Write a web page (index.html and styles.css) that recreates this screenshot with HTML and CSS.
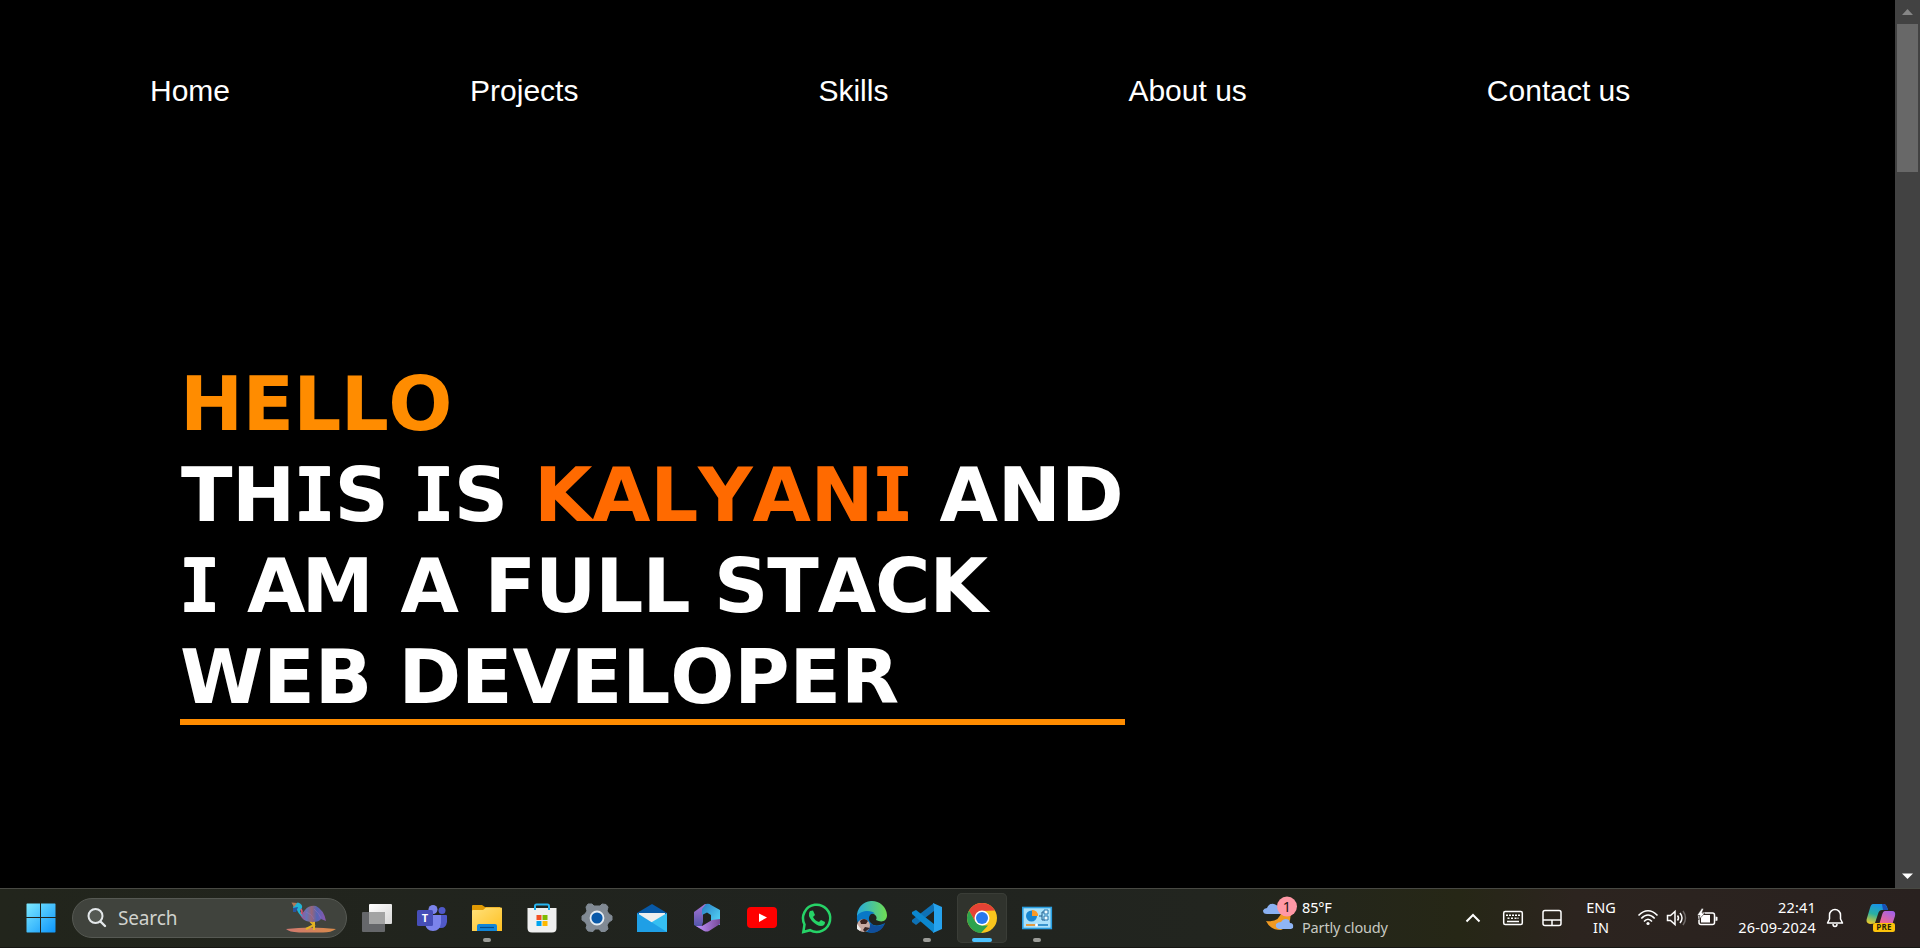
FILE: index.html
```html
<!DOCTYPE html>
<html lang="en">
<head>
<meta charset="utf-8">
<title>Portfolio</title>
<link rel="stylesheet" href="styles.css">
</head>
<body>
<div class="window">
  <main class="page">
    <nav class="nav">
      <a>Home</a><a>Projects</a><a>Skills</a><a>About us</a><a>Contact us</a>
    </nav>
    <h1 class="hero">
      <span class="line"><span class="w hello">HELLO</span></span>
      <span class="line"><span class="w this">TH<i>I</i>S</span> <span class="w is"><i>I</i>S</span> <span class="w name">KALYAN<i>I</i></span> <span class="w and">AND</span></span>
      <span class="line"><span class="w one"><i>I</i></span> <span class="w am">A<b>M</b></span> <span class="w a">A</span> <span class="w full">FULL</span> <span class="w stack">STACK</span></span>
      <span class="line"><span class="w web">WEB</span> <span class="w dev">DEVELOPER</span></span>
    </h1>
  </main>
  <aside class="scrollbar">
    <svg width="25" height="24"><path d="M7 15L12.500 9L18 15Z" fill="#868686"/></svg>
    <div class="thumb"></div>
    <svg class="down" width="25" height="24"><path d="M7 9.500L12.500 15L18 9.500Z" fill="#fff"/></svg>
  </aside>
</div>
<footer class="taskbar">
  <svg class="start" width="30" height="30" viewBox="0 0 30 30">
    <defs><linearGradient id="win" gradientUnits="userSpaceOnUse" x1="0" y1="0" x2="30" y2="30"><stop offset="0" stop-color="#7feaff"/><stop offset="1" stop-color="#0a94fb"/></linearGradient></defs>
    <path fill="url(#win)" d="M1 .5H14V14H.5V1ZM15 .5H29L29.500 1V14H15ZM.5 15H14V29.500H1L.5 29ZM15 15H29.500V29L29 29.500H15Z"/>
  </svg>
  <div class="search">
    <svg width="20" height="20" viewBox="0 0 20 20" fill="none" stroke="#e4e8ea" stroke-width="2"><circle cx="8.500" cy="8" r="7" fill="#555952"/><path d="M13.500 13.500L18 18" stroke-width="2.400" stroke-linecap="round"/></svg>
    <span>Search</span>
    <svg class="bird" width="52" height="32" viewBox="0 0 52 32">
      <defs><linearGradient id="fe" x1="0" x2="1"><stop offset="0" stop-color="#b24b8e"/><stop offset=".25" stop-color="#6674b6"/><stop offset=".45" stop-color="#986579"/><stop offset=".65" stop-color="#5365b5"/><stop offset="1" stop-color="#8f55ad"/></linearGradient>
      <linearGradient id="sand" x1="0" x2="1"><stop offset="0" stop-color="#d17970"/><stop offset="1" stop-color="#d88a49"/></linearGradient></defs>
      <path d="M1 27Q26 24 51 27Q46 30.500 38 30.500H14Q4 30 1 27Z" fill="url(#sand)"/>
      <path d="M25 19L29 23L21 27M29 19V28" stroke="#e4b223" stroke-width="2" fill="none"/>
      <path d="M15 10Q15 14 17 16Q20 20 28 20Q34 20 36 17L41 19Q39 8 31 4Q24 3 20 8L16 13Z" fill="url(#fe)"/>
      <path d="M9 2L13 .500Q18 2 17 6L15 9L18 15Q14 13 12 8L8 6Z" fill="#20b4d5"/>
      <path d="M6.500 .500L12 1L9 5Z" fill="#b37855"/><path d="M8 6L13 5L11 10L8 10Z" fill="#2753a0"/>
      <path d="M16 7Q18 10 16 12" stroke="#df5570" stroke-width="1.500" fill="none"/>
      <path d="M21 10Q27 12 29 17M29 7Q34 11 36 16" stroke="#9671bd" stroke-opacity=".5" fill="none"/>
    </svg>
  </div>
  <div class="apps">
    <div class="app"><svg width="32" height="32" viewBox="0 0 32 32"><defs><linearGradient id="tv" x1="0" y1="0" x2="1" y2="1"><stop offset="0" stop-color="#fff"/><stop offset="1" stop-color="#d7d7d7"/></linearGradient></defs><rect x="1" y="10" width="23" height="20" rx="1" fill="#65676a"/><rect x="8" y="2" width="23" height="20" rx="1" fill="url(#tv)"/><rect x="8" y="10" width="16" height="12" fill="#a3a4a4"/></svg></div>
    <div class="app"><svg width="32" height="32" viewBox="0 0 32 32"><circle cx="26" cy="8.500" r="3.500" fill="#5059c9"/><path d="M20 13H30Q31 13 31 14V20Q30 26 25 26H20Z" fill="#5059c9"/><circle cx="17" cy="7.500" r="4.500" fill="#7b83eb"/><path d="M9 13H25V21Q24 29 17 29T9 21Z" fill="#7b83eb"/><rect x="1" y="8" width="16" height="16" rx="1.500" fill="#464eb8"/><text x="9" y="20" class="team-t" text-anchor="middle">T</text></svg></div>
    <div class="app run"><svg width="32" height="32" viewBox="0 0 32 32"><defs><linearGradient id="fo" x1="0" y1="0" x2="1" y2="1"><stop offset="0" stop-color="#ffe17b"/><stop offset="1" stop-color="#ffc021"/></linearGradient></defs><path d="M1 12V4Q1 3 2 3H11L14 5H29V12Z" fill="#e09a04"/><path d="M1 9Q1 8 2 8H12L15 5.500H30Q31 5.500 31 6.500V29H1Z" fill="url(#fo)"/><path d="M6 29V24Q6 22 8 22H24Q26 22 26 24V29Z" fill="#1186d8"/><path d="M9 25.500H23" stroke="#064b87" stroke-width="1.200"/></svg></div>
    <div class="app"><svg width="32" height="32" viewBox="0 0 32 32"><path d="M9 9V4Q9 2.500 10.500 2.500H21.500Q23 2.500 23 4V9" fill="none" stroke="#27b4ef" stroke-width="2"/><path d="M1.500 6H30.500V26Q30.500 30.500 26 30.500H6Q1.500 30.500 1.500 26Z" fill="#f0f0f0"/><path d="M9 6V8M23 6V8" stroke="#1aa8e8" stroke-width="2"/><path fill="#f25022" d="M10.500 13h5v5h-5z"/><path fill="#7fba00" d="M16.500 13h5v5h-5z"/><path fill="#00a4ef" d="M10.500 19h5v5h-5z"/><path fill="#ffb900" d="M16.500 19h5v5h-5z"/></svg></div>
    <div class="app"><svg width="32" height="32" viewBox="0 0 32 32"><path d="M7 2L11 2L13 4H19L21 2L25 2.500L27 5L26 9L28 12L31 14V18L28 20L26 23L27 27L24 29.500H20L18 27H14L12 29.500L7 29L5 26L6 23L4 20L1 18V14L4 12L6 9L5 5Z" fill="#818a94" stroke="#818a94" stroke-linejoin="round"/><circle cx="16" cy="16" r="6.500" fill="#0959a9" stroke="#e6edf3" stroke-width="1.800"/></svg></div>
    <div class="app"><svg width="32" height="32" viewBox="0 0 32 32"><path d="M1 11L16 2L31 11V18H1Z" fill="#0759a7"/><path d="M3 11H29V22H3Z" fill="#eee"/><path d="M31 11V30H1L16 20Z" fill="#35bff2"/><path d="M1 11L31 30H1Z" fill="#1f9fe6"/></svg></div>
    <div class="app"><svg width="32" height="32" viewBox="0 0 32 32"><defs><linearGradient id="ma" x1="0" y1="0" x2="0" y2="1"><stop offset="0" stop-color="#aa75d5"/><stop offset="1" stop-color="#4752a5"/></linearGradient><linearGradient id="mb" x1="0" y1="0" x2="1" y2="1"><stop offset="0" stop-color="#287ec4"/><stop offset="1" stop-color="#58ddfc"/></linearGradient><linearGradient id="mc" x1="0" y1="0" x2="1" y2="0"><stop offset="0" stop-color="#c393ff"/><stop offset="1" stop-color="#784a99"/></linearGradient></defs><path d="M14 2L18 3L12 11V20L10 27L3 23V10Z" fill="url(#ma)"/><path d="M15 2Q18 1 20 3L29 8V23L20 19V13L16 10.500L11 13V7Z" fill="url(#mb)"/><path d="M29 17V22L18 29Q16 30 13 29L5 24H11L21 18Z" fill="url(#mc)"/></svg></div>
    <div class="app"><svg width="32" height="32" viewBox="0 0 32 32"><rect x="1" y="5" width="30" height="21" rx="4" fill="#f00"/><path d="M13 11.500L21 15.500L13 20Z" fill="#fff"/></svg></div>
    <div class="app"><svg width="32" height="32" viewBox="0 0 32 32"><path d="M3.500 22.500A13.600 13.600 0 1 1 9 28.200L2.300 30Z" fill="none" stroke="#26d367" stroke-width="2.500"/><path d="M9 9L12 8.500L14 13L12 15Q14 19 18 20L20 18L24 20Q24 24 20 24Q16 24 11 19Q6 13 9 9Z" fill="#26d367"/></svg></div>
    <div class="app"><svg width="32" height="32" viewBox="0 0 32 32"><defs><linearGradient id="ea" x1="0" x2="1"><stop offset="0" stop-color="#25a9df"/><stop offset="1" stop-color="#70de51"/></linearGradient></defs><path d="M1 15A15 15 0 0 1 31 13C31 19 26 21 20 18C22 15 19 11 14 11C8 11 3 13 1 15Z" fill="url(#ea)"/><path d="M1 14C4 9 15 7 19 12C15 10 11 15 14 20C17 25 24 24 29 21C25 30 17 32 11 30C5 28 0 21 1 14Z" fill="#0878c6"/><path d="M15 21C18 26 26 24 29 21C26 30 17 33 11 29Z" fill="#104e9b"/><circle cx="7.500" cy="23.500" r="6.500" fill="#c9aaa2"/><path d="M4 19Q8 15 12 19L10 22H5Z" fill="#3c211d"/><path d="M1 22L5 27L4 29L1 27Z" fill="#eee"/><path d="M9 25L14 26L9 30L7 28Z" fill="#382525"/></svg></div>
    <div class="app run"><svg width="32" height="32" viewBox="0 0 32 32"><path d="M23 1V9L5 23L1 20V18Z" fill="#0e71b5"/><path d="M1 10L5 8L23 22V31L1 12Z" fill="#0c87ce"/><path d="M22 1L31 5V27L22 31L23 28V5Z" fill="#26a2ed"/></svg></div>
    <div class="app run active"><svg width="32" height="32" viewBox="0 0 32 32"><circle cx="16" cy="16" r="15" fill="#f9c51d"/><path d="M3 8.500A15 15 0 0 1 29 8.500L16 9L9.500 20Z" fill="#e54235"/><path d="M3 8.500L9.500 20L16 23.500H22L15 31A15 15 0 0 1 3 8.500Z" fill="#2da34e"/><circle cx="16" cy="16" r="7.500" fill="#fff"/><circle cx="16" cy="16" r="6" fill="#2878ed"/></svg></div>
    <div class="app run"><svg width="32" height="32" viewBox="0 0 32 32"><rect x="1.800" y="5.500" width="28.500" height="21" fill="#a9e1fa" stroke="#2a9ee0" stroke-width="1.600"/><circle cx="10.500" cy="14" r="5.500" fill="#1785d0"/><path d="M11 8A5.500 5.500 0 0 1 17 14H11Z" fill="#f99a25"/><path d="M18 14H21V10H24M21 14V18H24" fill="none" stroke="#235a88"/><path d="M23 8h4v4h-4zM23 14h4v4h-4z" fill="#eefaff" stroke="#2474ac"/><path d="M5 23H14" stroke="#f18a12" stroke-width="1.600"/><path d="M14 23H27" stroke="#1c83c4" stroke-width="1.600"/><circle cx="15.500" cy="23" r="1.500" fill="#fff"/></svg></div>
  </div>
  <div class="weather">
    <svg class="sky" width="36" height="36" viewBox="0 0 36 36"><path d="M28 14Q31 29 19 34Q8 34 4 25Q17 27 20 15Z" fill="#f19a22"/><path d="M5 18Q1 18 1 14.500Q2 12 5 12Q7 7 12 8Q16 9 16 12Q20 13 19 18Z" fill="#8ab0f1"/><path d="M17 33Q13 32 14 28Q16 26 19 26Q22 21 27 24L28 27Q32 27 31 32L29 33Z" fill="#8fb5f5"/><circle cx="25" cy="10.500" r="10" fill="#ff98a5"/><text x="25" y="16" text-anchor="middle" class="badge">1</text></svg>
    <div class="stack-text"><span class="temp">85°F</span><span class="cond">Partly cloudy</span></div>
  </div>
  <svg class="chev" width="16" height="16" viewBox="0 0 16 16" fill="none" stroke="#fff" stroke-width="2"><path d="M1.500 11.500L8 5L14.500 11.500"/></svg>
  <svg class="kbd" width="22" height="16" viewBox="0 0 22 16" fill="none" stroke="#fff" stroke-width="1.500"><rect x="1.700" y="1.400" width="18.600" height="13" rx="1.500"/><path d="M4 5.200h2m1 0h2m1 0h2m1 0h2m1 0h2M5.500 8.200h2m1.500 0h2m1.500 0h2m1 0h1M5 11.500h12"/></svg>
  <svg class="pad" width="22" height="18" viewBox="0 0 22 18" fill="none" stroke="#fff" stroke-width="1.500"><rect x="2" y="1.500" width="18" height="15" rx="2"/><path d="M2 11H20M11 11V16.500"/></svg>
  <div class="lang"><span>ENG</span><span>IN</span></div>
  <svg class="wifi" width="22" height="20" viewBox="0 0 22 20" fill="none" stroke="#fff" stroke-width="1.600"><path d="M1.500 7.500Q11 -2 20.500 7.500M4.300 10.500Q11 3.500 17.700 10.500M7 13.500Q11 9 15 13.500"/><circle cx="11" cy="15.500" r="1.600" fill="#fff" stroke="none"/></svg>
  <svg class="vol" width="22" height="20" viewBox="0 0 22 20" fill="none" stroke="#fff" stroke-width="1.500"><path d="M1.500 7.500H4.500L9 3.500V16.500L4.500 12.500H1.500Z"/><path d="M11.500 7.500Q13.500 10 11.500 12.500M14 5Q18 10 14 15"/><path d="M17 3Q22 10 17 17" stroke="#6e6967"/></svg>
  <svg class="bat" width="22" height="20" viewBox="0 0 22 20"><rect x="2" y="5" width="15.500" height="11.500" rx="2" fill="none" stroke="#fff" stroke-width="1.500"/><path d="M4 7H13V14.500H4ZM18.500 8.500L20.500 9V12.500L18.500 13Z" fill="#fff"/><path d="M5 0L0 7.500H3L1.500 12L8 5H5L6.500 1Z" fill="#fff" stroke="#29211f" stroke-width=".6"/></svg>
  <div class="clock"><span class="time">22:41</span><span class="date">26-09-2024</span></div>
  <svg class="bell" width="18" height="22" viewBox="0 0 18 22" fill="none" stroke="#fff" stroke-width="1.500"><path d="M1.500 16L3.500 12V8A5.500 5.500 0 0 1 14.500 8V12L16.500 16Z" stroke-linejoin="round"/><path d="M7 17Q7 19.500 9 19.500T11 17"/></svg>
  <svg class="copilot" width="32" height="32" viewBox="0 0 32 32"><defs><linearGradient id="ca" x1=".5" y1="0" x2=".2" y2="1"><stop offset="0" stop-color="#1793e8"/><stop offset=".5" stop-color="#2ab1a2"/><stop offset="1" stop-color="#f1cb25"/></linearGradient><linearGradient id="cb" x1=".8" y1="0" x2=".2" y2="1"><stop offset="0" stop-color="#a261eb"/><stop offset="1" stop-color="#fb6982"/></linearGradient></defs><path d="M8 2H19Q21 2 22 5L23 8H17Q14 8 13 12L10 21Q9 22 5 22Q0 21 2 16L5 6Q6 2 8 2Z" fill="url(#ca)"/><path d="M17 2H19Q21 2 23 8H18Z" fill="#174fb6"/><path d="M20 9H27Q31 9 30 14L27 23H14L17 13Q18 9 20 9Z" fill="url(#cb)"/><rect x="8" y="21" width="22" height="9" rx="2" fill="#fcc30b"/><text x="19" y="28.300" text-anchor="middle" class="pre">PRE</text></svg>
</footer>
</body>
</html>
```
FILE: styles.css
```css
* { box-sizing: border-box; }
body { margin: 0; height: 948px; display: flex; flex-direction: column; overflow: hidden; background: #000; color: #fff; font-family: "Noto Sans", sans-serif; }
svg { display: block; flex: none; overflow: visible; }
.window { display: flex; height: 888px; }
.page { flex: 1; }
.nav { display: flex; gap: 240px; padding: 73px 0 0 150px; font: 30px/35px "Liberation Sans", Arial, sans-serif; white-space: nowrap; }
.hero { margin: 251px 0 0 180px; width: 945px; border-bottom: 6px solid #ff8c00; font: bold 75.500px/91px "DejaVu Sans", sans-serif; font-kerning: none; }
.line { display: flex; height: 91px; white-space: nowrap; }
.line:last-child { height: 87px; }
/* The monospace face has a capital I with serifs */
.w i { display: inline-block; margin: 0 -2.500px 0 -3px; transform: scaleX(.88); font-family: "DejaVu Sans Mono", monospace; font-style: normal; line-height: 1; letter-spacing: 0; text-shadow: 1px 0 currentColor, -1px 0 currentColor; }
.w b { display: inline-block; transform: scaleX(.95); transform-origin: left; margin: 0 -4px 0 -2px; line-height: 1; }
.hello { color: #ff8c00; letter-spacing: -.7px; }
.this { margin-left: 1px; letter-spacing: -.6px; }
.is { margin-left: 25.500px; letter-spacing: -.2px; }
.name { margin-left: 26px; color: #ff6a00; letter-spacing: -.3px; }
.and { margin-left: 26px; }
.am { margin-left: 27px; letter-spacing: -1px; }
.a { margin-left: 28px; }
.full { margin-left: 25.500px; letter-spacing: -1px; }
.stack { margin-left: 24.500px; letter-spacing: -1.100px; }
.dev { margin-left: 26px; letter-spacing: -.1px; }

.scrollbar { width: 25px; background: #424242; display: flex; flex-direction: column; align-items: center; }
.thumb { width: 21px; height: 148px; background: #686868; }
.down { margin-top: auto; }

.taskbar { height: 60px; display: flex; align-items: center; border-top: 1px solid #484943; border-bottom: 1px solid #171713; background: linear-gradient(90deg, #22251c 0, #20231f 45%, #22251f 63%, #262716 76%, #2c241f 82%, #29211f 100%); padding-left: 25.500px; }
.search { margin-left: 16.500px; width: 275px; height: 40px; border: 1px solid #565953; border-radius: 20px; background: #40433d; display: flex; align-items: center; padding: 0 9px 0 14px; }
.search span { margin-left: 11px; font-size: 19px; letter-spacing: -.15px; color: #d0d2cd; }
.bird { margin-left: auto; }
.apps { display: flex; margin-left: 5px; gap: 5px; }
.app { position: relative; width: 50px; height: 50px; display: flex; align-items: center; justify-content: center; border-radius: 5px; }
.active { background: #30332d; box-shadow: inset 0 0 0 1px #3a3d37; }
.run::after { content: ""; position: absolute; left: 21px; bottom: 1px; width: 8px; height: 4px; border-radius: 2px; background: #9b9c98; }
.active::after { left: 15px; width: 20px; background: #4cc2ff; }
.team-t { font: bold 11px "Open Sans", sans-serif; fill: #fff; }
.weather { display: flex; align-items: center; margin-left: 200px; width: 130px; }
.sky { margin-bottom: 9px; }
.stack-text, .lang, .clock { display: flex; flex-direction: column; font-size: 14.500px; line-height: 20px; white-space: nowrap; padding-bottom: 2px; }
.stack-text { margin-left: 4px; letter-spacing: -.15px; }
.cond { color: #c8c9c2; }
.badge { font: 14.500px "Noto Sans", sans-serif; fill: #1d1314; }
.chev { margin-left: 73px; }
.kbd { margin-left: 21px; }
.pad { margin-left: 17px; }
.lang { margin-left: 18px; width: 40px; align-items: center; }
.wifi { margin-left: 16px; }
.vol { margin-left: 7px; }
.bat { margin-left: 9px; }
.clock { margin-left: 19px; width: 78px; align-items: flex-end; letter-spacing: .2px; }
.bell { margin-left: 10px; }
.copilot { margin-left: 21px; }
.pre { font: bold 8px "Open Sans", sans-serif; fill: #2b2409; letter-spacing: .3px; }
```
